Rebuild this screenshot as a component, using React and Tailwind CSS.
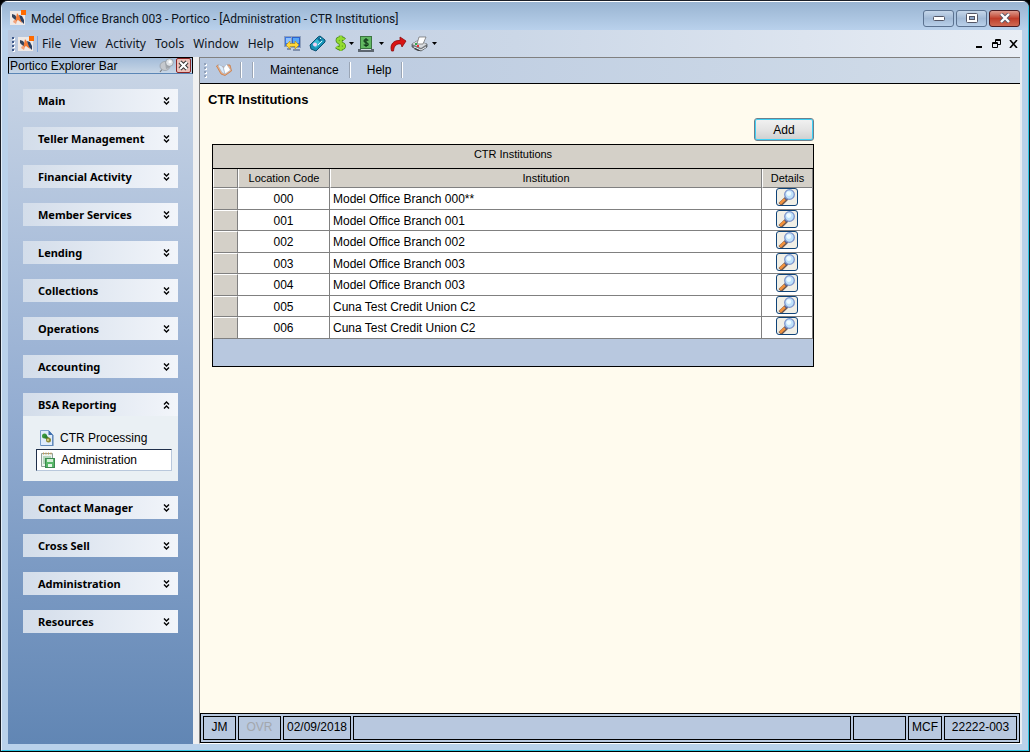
import React from "react";

const sections = [
  { name: "Main" },
  { name: "Teller Management" },
  { name: "Financial Activity" },
  { name: "Member Services" },
  { name: "Lending" },
  { name: "Collections" },
  { name: "Operations" },
  { name: "Accounting" },
  { name: "BSA Reporting", open: true },
  { name: "Contact Manager" },
  { name: "Cross Sell" },
  { name: "Administration" },
  { name: "Resources" },
];

const institutions = [
  ["000", "Model Office Branch 000**"],
  ["001", "Model Office Branch 001"],
  ["002", "Model Office Branch 002"],
  ["003", "Model Office Branch 003"],
  ["004", "Model Office Branch 003"],
  ["005", "Cuna Test Credit Union C2"],
  ["006", "Cuna Test Credit Union C2"],
];

function AppIcon() {
  return (
    <svg width="17" height="16" viewBox="0 0 17 16" className="shrink-0">
      <rect x="0" y="1" width="15" height="14" fill="#efe9e6" />
      <path d="M2 4l3 1 2 3v3L4 9 2 7z" fill="#34445c" />
      <path d="M7 3l3 4 2 6-4-3-3 2 1-4z" fill="#f27a35" />
      <path d="M9 5l3 1 2 4v4l-3-3z" fill="#2b3f60" />
      <path d="M4 10l3 1-1 3-3-2z" fill="#f2a27a" />
      <rect x="11" y="0" width="5" height="5" fill="#ff6a00" />
    </svg>
  );
}

function Grip({ color = "#405a8c" }) {
  return (
    <svg width="4" height="16" viewBox="0 0 4 16" className="shrink-0">
      {[1, 5, 9, 13].map((y) => (
        <g key={y}>
          <rect x="1" y={y + 1} width="2" height="2" fill="#fff" />
          <rect x="0" y={y} width="2" height="2" fill={color} />
        </g>
      ))}
    </svg>
  );
}

function DoubleChevron({ up }) {
  return (
    <svg width="7" height="8" viewBox="0 0 7 8" fill="none" stroke="#000" strokeWidth="1.4">
      {up ? <path d="M1 3.5L3.5 1 6 3.5M1 7.5L3.5 5 6 7.5" /> : <path d="M1 .5L3.5 3 6 .5M1 4.500L3.5 7 6 4.500" />}
    </svg>
  );
}

function Caret() {
  return (
    <svg width="5" height="3" viewBox="0 0 5 3" className="shrink-0">
      <path d="M0 0h5L2.500 3z" fill="#000" />
    </svg>
  );
}

function MonitorsIcon() {
  return (
    <svg width="17" height="16" viewBox="0 0 17 16">
      <rect x=".5" y=".5" width="9" height="10" fill="#3d74dd" stroke="#8fa0bd" />
      <rect x="2" y="2" width="5" height="5" fill="#8fc2ff" />
      <rect x="7.500" y=".5" width="9" height="11" fill="#2d62cf" stroke="#8fa0bd" />
      <rect x="9" y="2" width="6" height="5" fill="#58a6f5" />
      <path d="M3 12h4v2H3zM9 13h7v2H9z" fill="#7f90ae" />
      <path d="M2 9l4-4v2.500h5V5l4 4-4 4v-2.500H6V13z" fill="#ffd83a" stroke="#b68b12" strokeWidth=".6" />
    </svg>
  );
}

function HandsetIcon() {
  return (
    <svg width="17" height="17" viewBox="0 0 17 17">
      <path d="M1 10L9 2l2-1 5 4v2l-9 9-5-2z" fill="#1691b4" stroke="#0a4f72" />
      <path d="M3 9l7-7 4 4-7 7z" fill="#35bad2" />
      <path d="M8 4l2-2 3 3-2 2z" fill="#126c96" />
      <circle cx="6" cy="9.500" r="2" fill="#f3cff1" />
      <path d="M11 3l1 1M13 6l-4 4" stroke="#dff7ff" />
    </svg>
  );
}

function DollarIcon() {
  return (
    <svg width="13" height="17" viewBox="0 0 13 17" fill="none">
      <path d="M10.500 4.800C8.500 2.500 3.500 2.700 3.500 5.600 3.500 8.500 10 7.800 10 11c0 3-5.500 3-7.500.7M6.700.8v15" stroke="#44801a" strokeWidth="3.800" />
      <path d="M10.500 4.800C8.500 2.500 3.500 2.700 3.500 5.600 3.500 8.500 10 7.800 10 11c0 3-5.500 3-7.500.7M6.700.8v15" stroke="#93dc30" strokeWidth="2.400" />
    </svg>
  );
}

function CashIcon() {
  return (
    <svg width="17" height="16" viewBox="0 0 17 16" fill="none">
      <rect x="2.500" y=".5" width="11" height="12" fill="#62b862" stroke="#3b7540" />
      <path d="M0 13h16v3H0z" fill="#5d6670" />
      <path d="M3 13.500h10" stroke="#d3dce0" />
      <path d="M10.300 4.500C9 3.200 6 3.300 6 5c0 1.700 4.200 1.200 4.200 3.200C10.200 10 7 10 5.700 8.700M8 2v9" stroke="#12381a" strokeWidth="1.200" />
    </svg>
  );
}

function RedoIcon() {
  return (
    <svg width="17" height="16" viewBox="0 0 17 16">
      <path d="M1.500 15C-.5 8 4 4 10 4.500V1l6 4-4 6-1-3C7 7.500 4 9 3.500 15z" fill="#d91414" stroke="#8d0a0a" strokeWidth=".8" />
    </svg>
  );
}

function PrinterIcon() {
  return (
    <svg width="17" height="16" viewBox="0 0 17 16">
      <path d="M1 8l5-3 10 3v3l-6 4-9-4z" fill="#777b80" stroke="#44474b" strokeWidth=".7" />
      <path d="M1 8l5-3 10 3-6 4z" fill="#d9dcdf" />
      <path d="M8 1h7l-3 7H6z" fill="#fff" stroke="#666" strokeWidth=".7" />
      <path d="M3 11l7 3 5-3" stroke="#e9ecef" fill="none" />
      <rect x="4" y="7" width="2" height="2" fill="#37a84c" />
      <rect x="6" y="9" width="2" height="2" fill="#e33" />
      <path d="M3 13l4 2h3l-6-3z" fill="#3d3f42" />
    </svg>
  );
}

function BookIcon() {
  return (
    <svg width="16" height="14" viewBox="0 0 16 14">
      <path d="M.5 3L2 2l5 2 3 1 1-3 3 0 1.500 6L9 12.500 5 11z" fill="#f0b084" stroke="#c57845" strokeWidth=".8" />
      <path d="M2 2.500c2-1 4 0 5.500 2.500L9 11 6 9.500z" fill="#dcecfb" stroke="#8fa9c6" strokeWidth=".5" />
      <path d="M7.500 5L10.500 1l4 6L9 11z" fill="#fff" stroke="#8fa9c6" strokeWidth=".5" />
    </svg>
  );
}

function PinIcon() {
  return (
    <svg width="15" height="15" viewBox="0 0 15 15">
      <path d="M1 14l4-5" stroke="#777" strokeWidth="1.200" />
      <ellipse cx="6" cy="8" rx="5" ry="4.500" fill="#c5c9ce" stroke="#8d9298" strokeWidth=".6" />
      <path d="M6 4l3-1 3 4-2 3-3 1z" fill="#a2a7ad" />
      <circle cx="10.500" cy="4.500" r="3.800" fill="#dfe3e7" stroke="#858a90" strokeWidth=".6" />
      <circle cx="11" cy="3.800" r="1.500" fill="#fff" />
    </svg>
  );
}

function ProcessingIcon() {
  return (
    <svg width="14" height="16" viewBox="0 0 14 16" className="shrink-0">
      <path d="M.5.5h8l4 4v11H.5z" fill="#dfecfb" stroke="#7ba0cc" />
      <path d="M8.500 0v5H13z" fill="#3f6fae" />
      <path d="M13 5v11H1" fill="none" stroke="#4f79ad" />
      <circle cx="4.500" cy="6" r="2.500" fill="#37973b" />
      <path d="M5 6l4 4" stroke="#2b7f33" strokeWidth="3" />
      <circle cx="8.500" cy="10" r="2.500" fill="#8d8a35" />
      <circle cx="8" cy="10" r=".9" fill="#e8e3a4" />
    </svg>
  );
}

function AdminIcon() {
  return (
    <svg width="14" height="16" viewBox="0 0 14 16" className="shrink-0">
      <path d="M.5 1.500h11v13H.5z" fill="#eef5f1" stroke="#8fa19a" />
      <path d="M2.500.5v2M5 .5v2M7.500.5v2M10 .5v2" stroke="#c99b55" />
      <path d="M2 5h8M2 7h2M2 9h2M2 11h2" stroke="#7fb98a" />
      <rect x="4.500" y="6.500" width="9" height="9" fill="#58b768" stroke="#3d8a50" />
      <rect x="6" y="7" width="6" height="3" fill="#d3efd6" />
      <rect x="7" y="12" width="4" height="3" fill="#e5f6e7" />
    </svg>
  );
}

function MagnifierIcon() {
  return (
    <svg width="18" height="16" viewBox="0 0 18 16" className="shrink-0">
      <path d="M2 15.500L9 9" stroke="#6b564e" strokeWidth="4.400" />
      <path d="M2 14.800L7 10" stroke="#f2913c" strokeWidth="2.600" />
      <path d="M7.500 10.500L9.500 8" stroke="#59648c" strokeWidth="3" />
      <circle cx="11.500" cy="5.500" r="4.800" fill="#bfe2fb" stroke="#7f95cc" strokeWidth="1.300" />
      <circle cx="10.800" cy="4.600" r="2.400" fill="#eefaff" />
    </svg>
  );
}

function Separator() {
  return <span className="h-4 w-0.5 shrink-0 border-r border-l border-r-white border-l-[#9aa5b5]" />;
}

function TitleBar() {
  const base = "flex h-[17px] w-[31px] items-center justify-center rounded-[3px] border";
  return (
    <header className="flex h-7 items-center bg-linear-to-b from-[#99b4d1] to-[#b9d1ec] pr-2 pl-2">
      <span className="pt-1"><AppIcon /></span>
      <h1 className="ml-1 flex-1 pt-1.5 font-['Roboto'] text-xs whitespace-nowrap text-[#0d1522]">
        Model Office Branch 003 - Portico - [Administration - CTR Institutions]
      </h1>
      <div className="mt-1 flex gap-0.5">
        <button aria-label="Minimize" className={`${base} border-[#5b7290] bg-linear-to-b from-[#c6d7ea] via-[#a2bad6] to-[#b9d0ea]`}>
          <svg width="12" height="5" viewBox="0 0 12 5"><rect x=".5" y=".5" width="11" height="4" rx="1" fill="#fff" stroke="#535666" /></svg>
        </button>
        <button aria-label="Restore" className={`${base} border-[#5b7290] bg-linear-to-b from-[#c6d7ea] via-[#a2bad6] to-[#b9d0ea]`}>
          <svg width="12" height="10" viewBox="0 0 12 10">
            <rect x=".5" y=".5" width="11" height="9" rx="1" fill="#fff" stroke="#535666" />
            <rect x="3.500" y="3.500" width="5" height="3" fill="#8ea7c8" stroke="#535666" />
          </svg>
        </button>
        <button aria-label="Close" className={`${base} border-[#4a1c22] bg-linear-to-b from-[#dc9a8d] via-[#bf3c29] to-[#cf6a54]`}>
          <svg width="12" height="10" viewBox="0 0 12 10">
            <path d="M2 1l8 8M10 1L2 9" stroke="#535666" strokeWidth="4" />
            <path d="M2 1l8 8M10 1L2 9" stroke="#fff" strokeWidth="2.400" />
          </svg>
        </button>
      </div>
    </header>
  );
}

function MenuBar() {
  return (
    <nav aria-label="Menu" className="flex h-[27px] items-center bg-linear-to-r from-[#bac8de] via-[#cbd7e7] to-[#e9eef5] pl-1">
      <Grip />
      <span className="ml-0.5"><AppIcon /></span>
      <div className="ml-0.5 flex gap-[9px] border-l border-[#7fa6dc] pl-1 font-['Noto_Sans'] text-xs text-[#0d1522]">
        {["File", "View", "Activity", "Tools", "Window", "Help"].map((m) => (
          <button key={m}>{m}</button>
        ))}
      </div>
      <div className="ml-2.5 flex flex-1 items-center gap-2">
        <button aria-label="Workstations"><MonitorsIcon /></button>
        <button aria-label="Terminal"><HandsetIcon /></button>
        <button aria-label="Money" className="flex items-center gap-0.5"><DollarIcon /><Caret /></button>
        <button aria-label="Cash" className="-ml-1 flex items-center gap-1"><CashIcon /><Caret /></button>
        <button aria-label="Forward" className="-ml-0.5"><RedoIcon /></button>
        <button aria-label="Print" className="-ml-1 flex items-center gap-1"><PrinterIcon /><Caret /></button>
      </div>
      <div className="flex items-center gap-2 pr-1">
        <button aria-label="Minimize document">
          <svg width="10" height="10" viewBox="0 0 10 10"><path d="M2 7h6v2H2z" /></svg>
        </button>
        <button aria-label="Restore document">
          <svg width="9" height="9" viewBox="0 0 9 9" fill="none" stroke="#000">
            <path d="M3.500 3V.5h5v5H6M3 1.500h6M.5 3.500h5v5h-5zM0 4.500h6" />
          </svg>
        </button>
        <button aria-label="Close document">
          <svg width="9" height="8" viewBox="0 0 9 8"><path d="M1 0l7 8M8 0L1 8" stroke="#000" strokeWidth="1.600" /></svg>
        </button>
      </div>
    </nav>
  );
}

function Sidebar() {
  return (
    <aside className="flex w-[185px] shrink-0 flex-col bg-linear-to-b from-[#cad6e6] via-[#95aed2] to-[#6186b4]">
      <div className="flex h-[17px] items-center border border-black border-b-[#5b86b6] bg-linear-to-b from-[#a3bcd9] to-[#c8d6e6] pl-px">
        <h2 className="flex-1 text-xs">Portico Explorer Bar</h2>
        <button aria-label="Pin"><PinIcon /></button>
        <button aria-label="Close bar" className="mr-px ml-0.5 flex h-[15px] w-[15px] items-center justify-center rounded-[2px] border border-[#8b2424] bg-[#ecc0b9]">
          <svg width="11" height="11" viewBox="0 0 11 11">
            <path d="M2 2l7 7M9 2L2 9" stroke="#333" strokeWidth="4.200" />
            <path d="M2 2l7 7M9 2L2 9" stroke="#fff" strokeWidth="2.200" />
          </svg>
        </button>
      </div>
      <div className="flex flex-col gap-[15px] px-[15px] pt-[15px] pb-4">
        {sections.map((s) => (
          <section key={s.name}>
            <button
              aria-expanded={Boolean(s.open)}
              className="flex h-[23px] w-full items-center justify-between bg-linear-to-r from-[#d3ddea] to-[#f2f5fa] pr-2 pl-[15px] font-['Noto_Sans'] text-[11px] font-bold"
            >
              <span className="pt-0.5">{s.name}</span>
              <DoubleChevron up={s.open} />
            </button>
            {s.open && (
              <div className="bg-[#eaf0f4] pt-2.5 pr-1.5 pb-2.5 pl-[13px] text-xs">
                <a href="#processing" className="flex h-[23px] items-center gap-1.5 pl-1"><ProcessingIcon />CTR Processing</a>
                <a href="#administration" className="flex h-[22px] items-center gap-1.5 border border-[#b9c8dc] border-t-[#1f2f4a] border-l-[#1f2f4a] bg-white pl-1"><AdminIcon />Administration</a>
              </div>
            )}
          </section>
        ))}
      </div>
    </aside>
  );
}

function InstitutionTable() {
  const head = "h-[19px] border-r border-b border-l border-r-[#808080] border-b-[#808080] border-l-white bg-[#d4d0c8] p-0 text-[11px] leading-none font-normal";
  return (
    <div className="border border-black bg-[#b8c8df] pb-[27px]">
      <table className="w-full table-fixed border-separate border-spacing-0 text-xs leading-none">
        <caption className="h-6 border-b border-black bg-[#d4d0c8] pt-[3px] text-[11px] leading-3">CTR Institutions</caption>
        <colgroup>
          <col className="w-[25px]" />
          <col className="w-[92px]" />
          <col />
          <col className="w-[51px]" />
        </colgroup>
        <thead>
          <tr>
            <th aria-label="Row" className={head} />
            <th className={head}>Location Code</th>
            <th className={head}>Institution</th>
            <th className={head}>Details</th>
          </tr>
        </thead>
        <tbody>
          {institutions.map(([code, name]) => (
            <tr key={code} className="odd:h-[22px] even:h-[21px]">
              <td className="border-t border-r border-b border-l border-t-white border-r-[#808080] border-b-[#808080] border-l-white bg-[#d4d0c8] p-0" />
              <td className="border-r border-b border-[#808080] bg-white p-0 pt-px text-center">{code}</td>
              <td className="border-r border-b border-[#808080] bg-white p-0 pt-px pl-[3px]">{name}</td>
              <td className="border-r border-b border-[#808080] bg-white p-0 align-top">
                <button aria-label={`Details for ${code}`} className="mx-auto flex h-[18px] w-[22px] items-center justify-center rounded-[3px] border border-[#0f4378] bg-[#f1efe6]">
                  <MagnifierIcon />
                </button>
              </td>
            </tr>
          ))}
        </tbody>
      </table>
    </div>
  );
}

function StatusBar() {
  const cell = "flex items-center justify-center border border-black pb-0.5";
  return (
    <footer className="flex h-[30px] gap-0.5 border border-black bg-[#b8c8df] p-0.5 text-xs">
      <span className={`${cell} w-[33px]`}>JM</span>
      <span className={`${cell} w-[43px] text-[#a3a7ad]`}>OVR</span>
      <span className={`${cell} w-[68px]`}>02/09/2018</span>
      <span className={`${cell} flex-1`} />
      <span className={`${cell} w-[53px]`} />
      <span className={`${cell} w-[34px]`}>MCF</span>
      <span className={`${cell} w-[73px]`}>22222-003</span>
    </footer>
  );
}

export default function App() {
  return (
    <div className="h-screen min-h-[700px] bg-black font-['Liberation_Sans',sans-serif] text-black">
      <div className="flex h-full flex-col overflow-hidden rounded-t-lg border border-[#1a1f28] border-b-black">
        <div className="flex min-h-0 flex-1 flex-col border-t border-r border-b border-l border-t-white border-r-[#2ec6e4] border-b-[#2ec6e4] border-l-[#e3eef9] bg-[#b9d1ea]">
          <TitleBar />
          <div className="mx-1.5 mb-1.5 flex min-h-0 flex-1 flex-col">
            <MenuBar />
            <div className="flex min-h-0 flex-1 gap-1.5 bg-[#f0f0f0]">
              <Sidebar />
              <main className="flex min-w-0 flex-1 flex-col border-r-2 border-b border-l border-r-[#e9edf2] border-b-white border-l-[#808080] bg-[#fffbee]">
                <div className="flex h-[27px] shrink-0 items-center border-t border-b border-t-[#808080] border-b-black bg-linear-to-r from-[#b8c8df] to-[#d2dde9] pb-0.5 pl-1 text-xs">
                  <Grip color="#93a3bb" />
                  <button aria-label="Open book" className="mr-2 ml-2"><BookIcon /></button>
                  <Separator />
                  <span className="w-2.5" />
                  <Separator />
                  <button className="mr-2 ml-3.5 px-0.5">Maintenance</button>
                  <Separator />
                  <button className="mr-2 ml-3.5 px-0.5">Help</button>
                  <Separator />
                </div>
                <div className="flex-1 px-2 pt-2">
                  <h2 className="text-[13px] leading-4 font-bold">CTR Institutions</h2>
                  <div className="mt-2.5 ml-1 flex w-[602px] max-w-full flex-col gap-[3px]">
                    <button className="h-[23px] w-[60px] self-end rounded-[3px] border border-[#6d7f8c] bg-linear-to-b from-[#f2f2f2] via-[#e4e4e4] to-[#cfcfcf] text-xs shadow-[inset_0_0_0_1px_#3fd0f5]">
                      Add
                    </button>
                    <InstitutionTable />
                  </div>
                </div>
                <StatusBar />
              </main>
            </div>
          </div>
        </div>
      </div>
    </div>
  );
}
